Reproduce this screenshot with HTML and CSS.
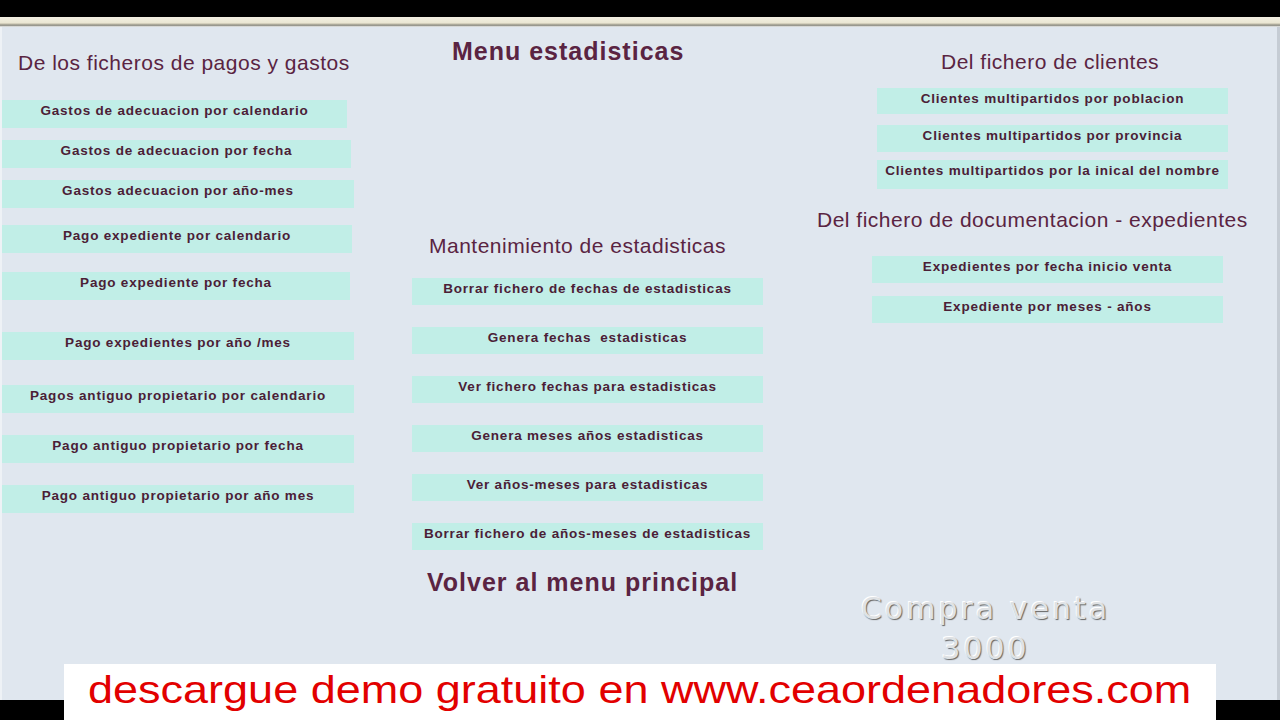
FILE: index.html
```html
<!DOCTYPE html>
<html lang="es">
<head>
<meta charset="utf-8">
<title>Menu estadisticas</title>
<link rel="stylesheet" href="styles.css">
</head>
<body>
<div class="screen">
  <div class="topbar"></div>
  <div class="frame-strip"></div>
  <main class="content">
    <section class="col col-left">
      <h2 class="heading h-left">De los ficheros de pagos y gastos</h2>
      <div class="btn">Gastos de adecuacion por calendario</div>
      <div class="btn">Gastos de adecuacion por fecha</div>
      <div class="btn">Gastos adecuacion por año-mes</div>
      <div class="btn">Pago expediente por calendario</div>
      <div class="btn">Pago expediente por fecha</div>
      <div class="btn">Pago expedientes por año /mes</div>
      <div class="btn">Pagos antiguo propietario por calendario</div>
      <div class="btn">Pago antiguo propietario por fecha</div>
      <div class="btn">Pago antiguo propietario por año mes</div>
    </section>
    <section class="col col-center">
      <h1 class="title t-menu">Menu estadisticas</h1>
      <h2 class="heading h-mant">Mantenimiento de estadisticas</h2>
      <div class="btn">Borrar fichero de fechas de estadisticas</div>
      <div class="btn">Genera fechas&nbsp; estadisticas</div>
      <div class="btn">Ver fichero fechas para estadisticas</div>
      <div class="btn">Genera meses años estadisticas</div>
      <div class="btn">Ver años-meses para estadisticas</div>
      <div class="btn">Borrar fichero de años-meses de estadisticas</div>
      <div class="title t-volver">Volver al menu principal</div>
    </section>
    <section class="col col-right">
      <h2 class="heading h-cli">Del fichero de clientes</h2>
      <div class="btn b-cli1">Clientes multipartidos por poblacion</div>
      <div class="btn b-cli2">Clientes multipartidos por provincia</div>
      <div class="btn b-cli3">Clientes multipartidos por la inical del nombre</div>
      <h2 class="heading h-doc">Del fichero de documentacion - expedientes</h2>
      <div class="btn b-doc1">Expedientes por fecha inicio venta</div>
      <div class="btn b-doc2">Expediente por meses - años</div>
    </section>
    <div class="watermark">Compra venta<br>3000</div>
  </main>
  <div class="bottombar"></div>
  <div class="banner"><span class="banner-text">descargue demo gratuito en www.ceaordenadores.com</span></div>
</div>
</body>
</html>
```

FILE: styles.css
```css
* { box-sizing: border-box; }
html, body { margin: 0; padding: 0; background: #000; }
body { font-family: "Liberation Sans", Arial, sans-serif; }

.screen {
  position: relative;
  width: 1280px;
  height: 720px;
  overflow: hidden;
  background: #000;
}
.topbar { height: 17px; background: #000; }
.frame-strip {
  height: 10px;
  background: linear-gradient(#f3f0e2 0%, #ebe7d4 55%, #c8c4b2 70%, #85857a 82%, #f6f7f8 100%);
}
.content {
  position: relative;
  height: 673px;
  background: #e0e7ef;
  border-left: 2px solid #eef2f6;
  border-right: 3px solid #c5ccd4;
  display: flex;
}
.bottombar { height: 20px; background: #000; }

.col { display: flex; flex-direction: column; align-items: flex-start; flex-shrink: 0; }
.col-left { width: 410px; }
.col-center { width: 403px; }
.col-right { width: 455px; margin-left: 2px; }

.heading {
  margin: 0;
  font-size: 21px;
  line-height: 24px;
  letter-spacing: 0.5px;
  font-weight: normal;
  color: #5a2442;
  white-space: nowrap;
}
.title {
  margin: 0;
  font-size: 25px;
  line-height: 28px;
  letter-spacing: 1px;
  font-weight: bold;
  color: #5a2442;
  white-space: nowrap;
}

.btn {
  height: 27px;
  padding-top: 3px;
  background: #c1eee7;
  color: #4b2036;
  font-weight: bold;
  font-size: 13.5px;
  line-height: 15px;
  letter-spacing: 0.8px;
  text-align: center;
  white-space: nowrap;
}

/* left column */
.h-left { margin-top: 24px; margin-left: 16px; }
.col-left .btn { width: 352px; height: 28px; }
.col-left .btn:nth-of-type(1) { margin-top: 25px; width: 345px; }
.col-left .btn:nth-of-type(2) { margin-top: 12px; width: 349px; }
.col-left .btn:nth-of-type(3) { margin-top: 12px; }
.col-left .btn:nth-of-type(4) { margin-top: 17px; width: 350px; }
.col-left .btn:nth-of-type(5) { margin-top: 19px; width: 348px; }
.col-left .btn:nth-of-type(6) { margin-top: 32px; }
.col-left .btn:nth-of-type(7) { margin-top: 25px; }
.col-left .btn:nth-of-type(8) { margin-top: 22px; }
.col-left .btn:nth-of-type(9) { margin-top: 22px; }

/* center column */
.t-menu { margin-top: 10px; margin-left: 40px; }
.h-mant { margin-top: 169px; margin-left: 17px; }
.col-center .btn { width: 351px; margin-top: 22px; }
.col-center .btn:nth-of-type(1) { margin-top: 20px; }
.t-volver { margin-top: 18px; margin-left: 15px; }

/* right column */
.h-cli { margin-top: 23px; margin-left: 124px; }
.col-right .btn { width: 351px; margin-left: 60px; }
.b-cli1 { margin-top: 14px; height: 26px; }
.b-cli2 { margin-top: 11px; }
.b-cli3 { margin-top: 8px; height: 29px; }
.h-doc { margin-top: 19px; margin-left: 0; }
.col-right .b-doc1 { margin-top: 24px; margin-left: 55px; }
.col-right .b-doc2 { margin-top: 13px; margin-left: 55px; }

/* watermark overlay */
.watermark {
  position: absolute;
  left: 846px;
  top: 562px;
  width: 275px;
  text-align: center;
  font-family: "DejaVu Sans", Verdana, sans-serif;
  font-size: 30px;
  line-height: 40px;
  letter-spacing: 3px;
  color: #dfe2e5;
  text-shadow: 1px 1px 1px #666666, -1px -1px 0 #ffffff;
}

/* subtitle banner overlay */
.banner {
  position: absolute;
  left: 64px;
  top: 664px;
  width: 1152px;
  height: 56px;
  background: #ffffff;
  padding-left: 24px;
  white-space: nowrap;
}
.banner-text {
  display: inline-block;
  color: #e20000;
  font-family: "Liberation Sans", Arial, sans-serif;
  font-size: 39px;
  line-height: 52px;
  transform: scaleX(1.154);
  transform-origin: left center;
}
```
